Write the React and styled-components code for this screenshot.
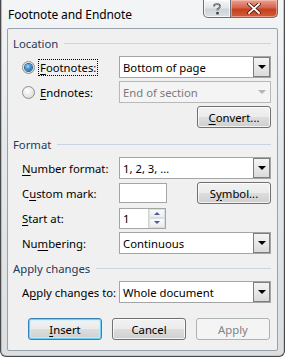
import React from "react";
import styled, { createGlobalStyle, css } from "styled-components";

const Global = createGlobalStyle`
  html, body { margin: 0; padding: 0; background: #ffffff; }
  body { font-family: "Noto Sans", "Segoe UI", Arial, sans-serif; font-size: 11.3px; color: #000; }
  * { box-sizing: border-box; }
`;

const Window = styled.div`
  width: 285px;
  height: 357px;
  border: 1px solid #4a4a4a;
  border-top: none;
  border-radius: 0 0 6px 6px;
  background: linear-gradient(180deg, #f3f5f7 0%, #e6e9ec 40%, #dcdfe2 100%);
  box-shadow: inset 1px 0 0 #b9bcbf, inset -1px 0 0 #c4c7ca, inset 0 -1px 0 #c4c7ca;
  display: flex;
  flex-direction: column;
  padding: 0 6px 5px 6px;
`;

const TitleBar = styled.div`
  height: 28px;
  display: flex;
  align-items: flex-start;
  justify-content: space-between;
`;

const Title = styled.div`
  padding: 6px 0 0 1px;
  font-size: 12px;
  color: #000;
  letter-spacing: -0.1px;
`;

const Caption = styled.div`
  display: flex;
  height: 18px;
`;

const CapButton = styled.div`
  height: 18px;
  display: flex;
  align-items: center;
  justify-content: center;
  border: 1px solid #6d6f73;
  border-top: none;
  ${(p) =>
    p.$close
      ? css`
          width: 47px;
          border-left: none;
          border-radius: 0 0 5px 0;
          background: linear-gradient(180deg, #e8a393 0%, #d7634c 45%, #c5401f 55%, #d25d3a 100%);
          box-shadow: inset 0 0 0 1px rgba(255, 210, 200, 0.5);
        `
      : css`
          width: 28px;
          border-radius: 0 0 0 5px;
          background: linear-gradient(180deg, #f6f7f8 0%, #e3e6e9 45%, #cfd3d7 55%, #dde1e4 100%);
          box-shadow: inset 0 0 0 1px rgba(255, 255, 255, 0.7);
        `}
`;

const Client = styled.div`
  flex: 1;
  background: #f0f0f0;
  border: 1px solid #98a2ad;
  border-radius: 2px;
  padding: 6px 5px 0 5px;
  display: flex;
  flex-direction: column;
`;

const GroupHeader = styled.div`
  height: 16px;
  display: flex;
  align-items: center;
  gap: 6px;
  color: #1e395b;
  margin-top: ${(p) => p.$mt || 0}px;
  &::after {
    content: "";
    flex: 1;
    height: 1px;
    background: #c9d5e2;
    margin-right: 1px;
  }
`;

const Row = styled.div`
  display: grid;
  grid-template-columns: ${(p) => p.$cols || "97px 152px"};
  align-items: center;
  height: 22px;
  padding-left: 9px;
  margin-top: ${(p) => p.$mt || 3}px;
`;

const RightRow = styled.div`
  display: flex;
  justify-content: flex-end;
  height: 22px;
  padding-right: 1px;
  margin-top: ${(p) => p.$mt || 3}px;
`;

const Label = styled.span`
  white-space: nowrap;
  color: ${(p) => (p.$disabled ? "#6d6d6d" : "#000")};
`;

const RadioLabel = styled.label`
  display: flex;
  align-items: center;
  gap: 4px;
`;

const RadioCircle = styled.span`
  width: 13px;
  height: 13px;
  border-radius: 50%;
  border: 1px solid #8e8f8f;
  background: radial-gradient(circle at 40% 35%, #ffffff 0%, #eaeaea 50%, #cdcdcd 100%);
  display: flex;
  align-items: center;
  justify-content: center;
  &::after {
    content: "";
    display: ${(p) => (p.$checked ? "block" : "none")};
    width: 7px;
    height: 7px;
    border-radius: 50%;
    background: radial-gradient(circle at 40% 35%, #a9d6f9 0%, #3a8fd5 45%, #104f8f 100%);
    box-shadow: 0 0 0 1px #2c628b;
  }
`;

const Focus = styled.span`
  padding: 0 1px;
  outline: 1px dotted #000;
  outline-offset: 0;
  line-height: 15px;
`;

const Combo = styled.div`
  height: 22px;
  width: 152px;
  border: 1px solid ${(p) => (p.$disabled ? "#b8b8b8" : "#a5a5a5")};
  background: ${(p) => (p.$disabled ? "#f4f4f4" : "#ffffff")};
  display: flex;
  align-items: center;
  justify-content: space-between;
  padding-left: 3px;
  color: ${(p) => (p.$disabled ? "#7a7a7a" : "#000")};
`;

const ComboButton = styled.span`
  width: 17px;
  height: 20px;
  border: 1px solid ${(p) => (p.$disabled ? "transparent" : "#7d7d7d")};
  background: ${(p) =>
    p.$disabled ? "transparent" : "linear-gradient(180deg, #f4f4f4 0%, #e8e8e8 50%, #dadada 100%)"};
  display: flex;
  align-items: center;
  justify-content: center;
  &::after {
    content: "";
    width: 0;
    height: 0;
    border-left: 4px solid transparent;
    border-right: 4px solid transparent;
    border-top: 4px solid ${(p) => (p.$disabled ? "#b4b4b4" : "#000")};
  }
`;

const TextBox = styled.div`
  width: ${(p) => p.$w || 48}px;
  height: ${(p) => p.$h || 20}px;
  background: #fff;
  border: 1px solid #a5a5a5;
  display: flex;
  align-items: center;
  padding-left: 3px;
`;

const Spinner = styled.div`
  width: 47px;
  height: 21px;
  background: #fff;
  border: 1px solid #a5a5a5;
  display: flex;
  align-items: stretch;
`;

const SpinValue = styled.span`
  flex: 1;
  display: flex;
  align-items: center;
  padding-left: 3px;
`;

const SpinButtons = styled.span`
  width: 17px;
  display: flex;
  flex-direction: column;
  border-left: 1px solid #d4d4d4;
`;

const SpinHalf = styled.span`
  flex: 1;
  display: flex;
  align-items: center;
  justify-content: center;
  background: linear-gradient(180deg, #fafafa 0%, #e9ecef 100%);
  border: 1px solid #d9dee3;
  &::after {
    content: "";
    width: 0;
    height: 0;
    border-left: 3px solid transparent;
    border-right: 3px solid transparent;
    ${(p) =>
      p.$up ? "border-bottom: 3px solid #4c5d8c;" : "border-top: 3px solid #4c5d8c;"}
  }
`;

const Button = styled.div`
  width: 74px;
  height: 22px;
  border-radius: 3px;
  display: flex;
  align-items: center;
  justify-content: center;
  justify-self: end;
  border: 1px solid #707070;
  background: linear-gradient(180deg, #f2f2f2 0%, #ebebeb 49%, #dddddd 51%, #cfcfcf 100%);
  box-shadow: inset 0 0 0 1px rgba(255, 255, 255, 0.75);
  color: #000;
  ${(p) =>
    p.$default &&
    css`
      border-color: #3c7fb1;
      box-shadow: inset 0 0 0 1px #6fd0f7, inset 0 0 0 2px rgba(200, 240, 255, 0.6);
    `}
  ${(p) =>
    p.$disabled &&
    css`
      border-color: #adb2b5;
      background: #f4f4f4;
      box-shadow: none;
      color: #838383;
    `}
`;

const Buttons = styled.div`
  display: flex;
  gap: 10px;
  padding-left: 15px;
  margin-top: 15px;
`;

const U = styled.span`
  text-decoration: underline;
  text-underline-offset: 2px;
`;

const HelpIcon = () => (
  <svg width="10" height="12" viewBox="0 0 10 12">
    <path
      d="M2 3.5 C2 1.5 3.5 1 5 1 C6.8 1 8 2 8 3.5 C8 5 6.2 5.3 5.5 6.3 L5.5 7.5"
      fill="none"
      stroke="#3a3d42"
      strokeWidth="1.6"
    />
    <path
      d="M2 3.5 C2 1.5 3.5 1 5 1 C6.8 1 8 2 8 3.5 C8 5 6.2 5.3 5.5 6.3 L5.5 7.5"
      fill="none"
      stroke="#fdfdfd"
      strokeWidth="0.5"
    />
    <rect x="4.3" y="9" width="2.4" height="2.4" fill="#3a3d42" />
  </svg>
);

const CloseIcon = () => (
  <svg width="14" height="11" viewBox="0 0 14 11">
    <path d="M2 1 L12 10 M12 1 L2 10" stroke="#4a1e14" strokeWidth="3.6" strokeLinecap="square" />
    <path d="M2 1 L12 10 M12 1 L2 10" stroke="#ffffff" strokeWidth="1.8" strokeLinecap="square" />
  </svg>
);

export default function App() {
  return (
    <>
      <Global />
      <Window>
        <TitleBar>
          <Title>Footnote and Endnote</Title>
          <Caption>
            <CapButton>
              <HelpIcon />
            </CapButton>
            <CapButton $close>
              <CloseIcon />
            </CapButton>
          </Caption>
        </TitleBar>
        <Client>
          <GroupHeader>Location</GroupHeader>
          <Row $mt={5}>
            <RadioLabel>
              <RadioCircle $checked />
              <Focus>
                <U>F</U>ootnotes:
              </Focus>
            </RadioLabel>
            <Combo>
              <span>Bottom of page</span>
              <ComboButton />
            </Combo>
          </Row>
          <Row>
            <RadioLabel>
              <RadioCircle />
              <Label style={{ paddingLeft: 1 }}>
                <U>E</U>ndnotes:
              </Label>
            </RadioLabel>
            <Combo $disabled>
              <span>End of section</span>
              <ComboButton $disabled />
            </Combo>
          </Row>
          <RightRow>
            <Button>
              <U>C</U>onvert...
            </Button>
          </RightRow>

          <GroupHeader $mt={8}>Format</GroupHeader>
          <Row $mt={5}>
            <Label>
              <U>N</U>umber format:
            </Label>
            <Combo>
              <span>1, 2, 3, …</span>
              <ComboButton />
            </Combo>
          </Row>
          <Row $cols="97px 48px 104px">
            <Label>
              C<U>u</U>stom mark:
            </Label>
            <TextBox $w={48} $h={20} />
            <Button>
              S<U>y</U>mbol...
            </Button>
          </Row>
          <Row>
            <Label>
              <U>S</U>tart at:
            </Label>
            <Spinner>
              <SpinValue>1</SpinValue>
              <SpinButtons>
                <SpinHalf $up />
                <SpinHalf />
              </SpinButtons>
            </Spinner>
          </Row>
          <Row>
            <Label>
              Nu<U>m</U>bering:
            </Label>
            <Combo>
              <span>Continuous</span>
              <ComboButton />
            </Combo>
          </Row>

          <GroupHeader $mt={6}>Apply changes</GroupHeader>
          <Row $mt={5}>
            <Label>
              A<U>p</U>ply changes to:
            </Label>
            <Combo>
              <span>Whole document</span>
              <ComboButton />
            </Combo>
          </Row>
          <Buttons>
            <Button $default>
              <U>I</U>nsert
            </Button>
            <Button>Cancel</Button>
            <Button $disabled>Apply</Button>
          </Buttons>
        </Client>
      </Window>
    </>
  );
}
